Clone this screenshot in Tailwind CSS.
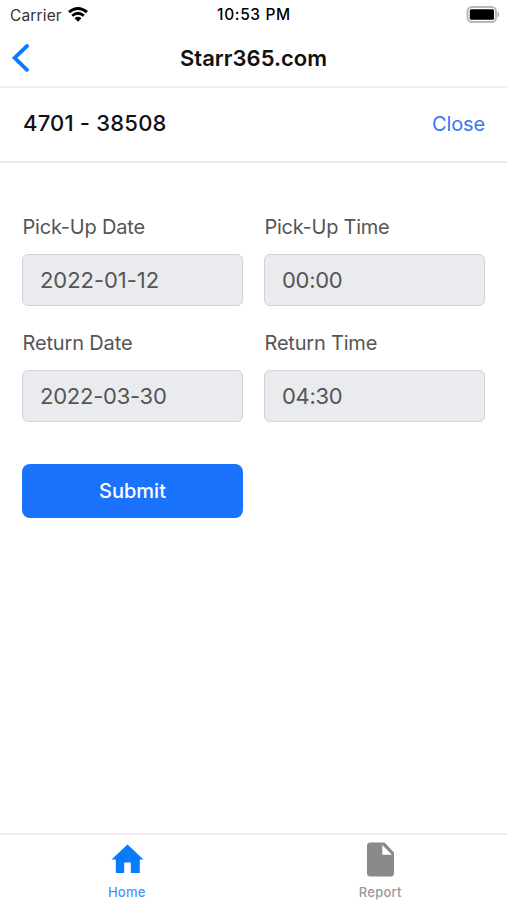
<!DOCTYPE html>
<html lang="en">
<head>
<meta charset="utf-8">
<title>Starr365.com</title>
<script src="https://cdn.jsdelivr.net/npm/@tailwindcss/browser@4"></script>
</head>
<body class="bg-white font-['Inter','Liberation_Sans',sans-serif]">
<div class="flex h-[900px] w-[507px] flex-col overflow-hidden bg-white text-[#111]">
  <div class="grid h-[30px] shrink-0 grid-cols-3 items-center px-[10px]">
    <div class="flex items-center gap-[6px] pt-px">
      <span class="text-[15.5px] leading-none tracking-[0.15px] text-[#333]">Carrier</span>
      <svg class="-mt-[3px] h-[15px] w-[20px]" viewBox="0 0 20 15" fill="none" stroke="#000" stroke-width="2.8"><path d="M1 5.2Q10-2.2 19 5.2M4.2 8.7Q10 3.7 15.8 8.7"/><path fill="#000" stroke="none" d="M6.6 11.2Q10 8.4 13.4 11.2L10 14.7Z"/></svg>
    </div>
    <span class="pl-px text-center text-[15.5px] font-medium leading-none tracking-[0.65px] text-black">10:53 PM</span>
    <svg class="-mr-[3px] -mt-px h-[17px] w-[34px] justify-self-end" viewBox="0 0 34 17"><rect x="1.6" y="1" width="28.4" height="15" rx="4.5" fill="#fff" stroke="#b8b8b8" stroke-width="2"/><rect x="3.8" y="3.2" width="24.2" height="10.6" rx="1.5" fill="#000"/><path d="M32 6.3q1.6 2.2 0 4.4z" fill="#aaa" stroke="#aaa"/></svg>
  </div>
  <header class="grid h-[58px] shrink-0 grid-cols-[60px_1fr_60px] items-center border-b-2 border-[#f0f0f0]">
    <svg class="ml-[12px] h-[28px] w-[18px]" viewBox="0 0 18 28" fill="none" stroke="#087bff" stroke-width="3.8" stroke-linecap="round"><path d="M15 2 2.6 13.8 15 25.8"/></svg>
    <h1 class="-mt-px text-center text-[22px] font-semibold leading-none tracking-[0.02px]">Starr365.com</h1>
  </header>
  <div class="flex h-[75px] shrink-0 items-center justify-between border-b-2 border-[#e8e8e8] px-[22px]">
    <span class="-mt-[3px] pl-px text-[22px] font-medium leading-none tracking-[0.2px]">4701 - 38508</span>
    <span class="-mt-[2px] text-[20px] leading-none tracking-[-0.15px] text-[#3478f6]">Close</span>
  </div>
  <main class="flex-1 px-[22px] pt-[52px]">
    <div class="grid grid-cols-2 gap-x-[21px] gap-y-[25px] text-[#555]">
      <div><div class="h-[39px] pl-[0.5px] text-[20px] leading-[25px] tracking-[-0.2px]">Pick-Up Date</div><div class="flex h-[52px] items-center rounded-[6px] border-[1.5px] border-[#ced4da] bg-[#e9ebee] px-[17px] text-[22px] tracking-[-0.05px]">2022-01-12</div></div>
      <div><div class="h-[39px] pl-[0.5px] text-[20px] leading-[25px] tracking-[-0.25px]">Pick-Up Time</div><div class="flex h-[52px] items-center rounded-[6px] border-[1.5px] border-[#ced4da] bg-[#e9ebee] px-[17px] text-[22px] tracking-[-0.3px]">00:00</div></div>
      <div><div class="h-[39px] pl-[0.5px] text-[20px] leading-[25px] tracking-[-0.15px]">Return Date</div><div class="flex h-[52px] items-center rounded-[6px] border-[1.5px] border-[#ced4da] bg-[#e9ebee] px-[17px] text-[22px] tracking-[-0.25px]">2022-03-30</div></div>
      <div><div class="h-[39px] pl-[0.5px] text-[20px] leading-[25px] tracking-[-0.2px]">Return Time</div><div class="flex h-[52px] items-center rounded-[6px] border-[1.5px] border-[#ced4da] bg-[#e9ebee] px-[17px] text-[22px] tracking-[-0.3px]">04:30</div></div>
    </div>
    <button class="mt-[42px] h-[54px] w-[221px] rounded-[8px] bg-[#1b72fc] text-[20px] font-medium text-white">Submit</button>
  </main>
  <nav class="grid h-[67px] shrink-0 grid-cols-2 border-t-2 border-[#eeeeee] text-[13px] font-medium leading-none tracking-[0.25px]">
    <div class="flex flex-col items-center text-[#4796f7]">
      <svg class="mt-[9px] h-[30px] w-[34px] translate-x-[0.5px]" viewBox="0 0 34 30" fill="#087bff"><path d="M17 .5 33 15.5H29.3V29H20.3V18.5H13.7V29H5.3V15.5H1Z"/></svg>
      <span class="mt-[12px]">Home</span>
    </div>
    <div class="flex flex-col items-center text-[#999]">
      <svg class="mt-[7px] h-[35px] w-[28px] translate-x-[0.5px]" viewBox="0 0 28 35" fill="#8a8a8a"><path fill-rule="evenodd" d="M4 .5H18L27.5 10.5V31Q27.5 34.5 24 34.5H4Q.5 34.5 .5 31V4Q.5.5 4 .5ZM15.8 3V12.8H25.3Z"/></svg>
      <span class="mt-[9px]">Report</span>
    </div>
  </nav>
</div>
</body>
</html>
